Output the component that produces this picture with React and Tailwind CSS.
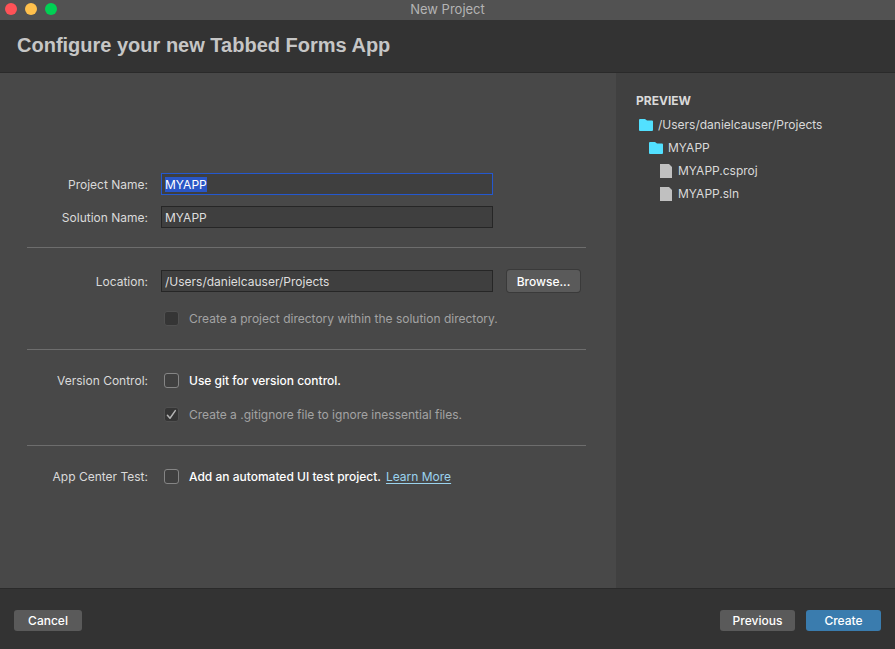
import { useEffect, useRef } from "react";

const inputClass =
  "h-[22px] w-full min-w-0 border bg-[#3f3f3f] px-[3px] text-[12px] leading-[15px] text-[#dedede] outline-none selection:bg-[#2a56c6] selection:text-white";
const buttonClass =
  "flex items-center justify-center rounded-[3px] text-[12px] leading-4 font-medium text-white";
const rowClass = "grid grid-cols-[121px_1fr_73px] items-center pr-[6px]";
const labelClass = "h-4 pt-px text-right text-[12px] leading-4 text-[#dadada]";

function Checkbox({ id, disabled, defaultChecked }) {
  const box = disabled
    ? "border-[#505050] bg-[#353535]"
    : "border-[#858585] bg-[#404040]";
  return (
    <span className="grid h-[15px] w-[15px] shrink-0 place-items-center">
      <input
        id={id}
        type="checkbox"
        disabled={disabled}
        defaultChecked={defaultChecked}
        className={`peer col-start-1 row-start-1 h-[15px] w-[15px] appearance-none rounded-[3px] border ${box}`}
      />
      <svg
        viewBox="0 0 15 15"
        className="pointer-events-none col-start-1 row-start-1 hidden h-[15px] w-[15px] peer-checked:block"
        fill="none"
        stroke="#b4b4b4"
        strokeWidth="1.5"
        strokeLinecap="round"
        strokeLinejoin="round"
      >
        <path d="M3.4 8.2 L6 11.2 L11.3 3.6" />
      </svg>
    </span>
  );
}

function Option({ id, label, disabled, defaultChecked, children }) {
  return (
    <div className="col-span-2 flex h-4 items-center pl-4">
      <Checkbox id={id} disabled={disabled} defaultChecked={defaultChecked} />
      <label
        htmlFor={id}
        className={`ml-[10px] h-4 pt-px text-[12px] leading-4 whitespace-nowrap ${
          disabled ? "text-[#a3a3a3]" : "font-medium text-white"
        }`}
      >
        {label}
      </label>
      {children}
    </div>
  );
}

function FolderIcon() {
  return (
    <svg viewBox="0 0 14 12" className="h-3 w-[14px] shrink-0" fill="#52e0ff">
      <path d="M0 1 Q0 0 1 0 H6 L8 1.5 H13 Q14 1.5 14 2.5 V11 Q14 12 13 12 H1 Q0 12 0 11 Z" />
    </svg>
  );
}

function FileIcon() {
  return (
    <svg viewBox="0 0 12 14" className="h-[14px] w-3 shrink-0" fill="#c0c0c0">
      <path d="M0 0 H9 L12 3 V14 H0 Z" />
    </svg>
  );
}

export default function App() {
  const nameRef = useRef(null);

  useEffect(() => {
    nameRef.current.focus();
    nameRef.current.select();
  }, []);

  return (
    <div className="flex min-h-screen flex-col bg-[#484848] font-['Inter','Liberation_Sans',sans-serif] text-[12px]">
      <div className="grid h-5 grid-cols-[1fr_auto_1fr] items-center bg-[#525252]">
        <div className="flex gap-2 pb-[2px] pl-[5px]">
          <button aria-label="Close" className="h-3 w-3 rounded-full bg-[#ff5257]" />
          <button aria-label="Minimize" className="h-3 w-3 rounded-full bg-[#ffc04c]" />
          <button aria-label="Zoom" className="h-3 w-3 rounded-full bg-[#00d154]" />
        </div>
        <div className="pb-[2px] text-[13px] leading-4 text-[#b4b4b4]">New Project</div>
        <div />
      </div>

      <header className="flex h-[53px] items-center border-b border-[#2a2a2a] bg-[#333333] px-[17px] pb-[2px]">
        <h1 className="font-['Liberation_Sans',sans-serif] text-[20px] leading-6 font-bold text-[#c6c6c6]">
          Configure your new Tabbed Forms App
        </h1>
      </header>

      <div className="flex flex-1">
        <main className="flex flex-1 flex-col justify-center pr-[30px] pb-1 pl-[27px]">
          <section className="flex flex-col gap-[11px] border-b border-[#6d6d6d] pb-[19px]">
            <div className={rowClass}>
              <label htmlFor="project" className={labelClass}>Project Name:</label>
              <div className="pr-[14px] pl-[13px]">
                <input ref={nameRef} id="project" defaultValue="MYAPP" className={`${inputClass} border-[#2458cf]`} />
              </div>
            </div>
            <div className={rowClass}>
              <label htmlFor="solution" className={labelClass}>Solution Name:</label>
              <div className="pr-[14px] pl-[13px]">
                <input id="solution" defaultValue="MYAPP" className={`${inputClass} border-[#262626]`} />
              </div>
            </div>
          </section>

          <section className="flex flex-col gap-[18px] border-b border-[#6d6d6d] pt-[22px] pb-[23px]">
            <div className={rowClass}>
              <label htmlFor="location" className={labelClass}>Location:</label>
              <div className="pr-[14px] pl-[13px]">
                <input id="location" defaultValue="/Users/danielcauser/Projects" className={`${inputClass} border-[#262626]`} />
              </div>
              <button className={`${buttonClass} h-[22px] bg-[#5a5a5a] pt-px ring-1 ring-[#3a3a3a]`}>Browse...</button>
            </div>
            <div className={rowClass}>
              <span />
              <Option id="dir" disabled label="Create a project directory within the solution directory." />
            </div>
          </section>

          <section className="flex flex-col gap-[18px] border-b border-[#6d6d6d] pt-[22px] pb-[23px]">
            <div className={rowClass}>
              <span className={labelClass}>Version Control:</span>
              <Option id="git" label="Use git for version control." />
            </div>
            <div className={rowClass}>
              <span />
              <Option id="ignore" disabled defaultChecked label="Create a .gitignore file to ignore inessential files." />
            </div>
          </section>

          <section className="pt-[22px]">
            <div className={rowClass}>
              <span className={labelClass}>App Center Test:</span>
              <Option id="uitest" label="Add an automated UI test project.">
                <a
                  href="#learn"
                  className="ml-[5px] h-4 pt-px leading-4 whitespace-nowrap text-[#9ad3ee] underline underline-offset-2"
                >
                  Learn More
                </a>
              </Option>
            </div>
          </section>
        </main>

        <aside className="w-[279px] shrink-0 bg-[#404040] px-5 pt-5 text-[12px] leading-4 text-[#dadada]">
          <h2 className="font-bold">PREVIEW</h2>
          <ul className="mt-2 flex flex-col gap-[7px]">
            <li className="flex items-center gap-[5px] pl-[3px]"><FolderIcon />/Users/danielcauser/Projects</li>
            <li className="flex items-center gap-[5px] pl-[13px]"><FolderIcon />MYAPP</li>
            <li className="flex items-center gap-[6px] pl-[24px]"><FileIcon />MYAPP.csproj</li>
            <li className="flex items-center gap-[6px] pl-[24px]"><FileIcon />MYAPP.sln</li>
          </ul>
        </aside>
      </div>

      <footer className="flex border-t border-[#2a2a2a] bg-[#333333] px-[14px] pt-[21px] pb-[18px]">
        <button className={`${buttonClass} h-[21px] w-[68px] bg-[#5a5a5a]`}>Cancel</button>
        <button className={`${buttonClass} ml-auto h-[21px] w-[75px] bg-[#5a5a5a]`}>Previous</button>
        <button className={`${buttonClass} ml-[11px] h-[21px] w-[75px] bg-[#3a7cae]`}>Create</button>
      </footer>
    </div>
  );
}
